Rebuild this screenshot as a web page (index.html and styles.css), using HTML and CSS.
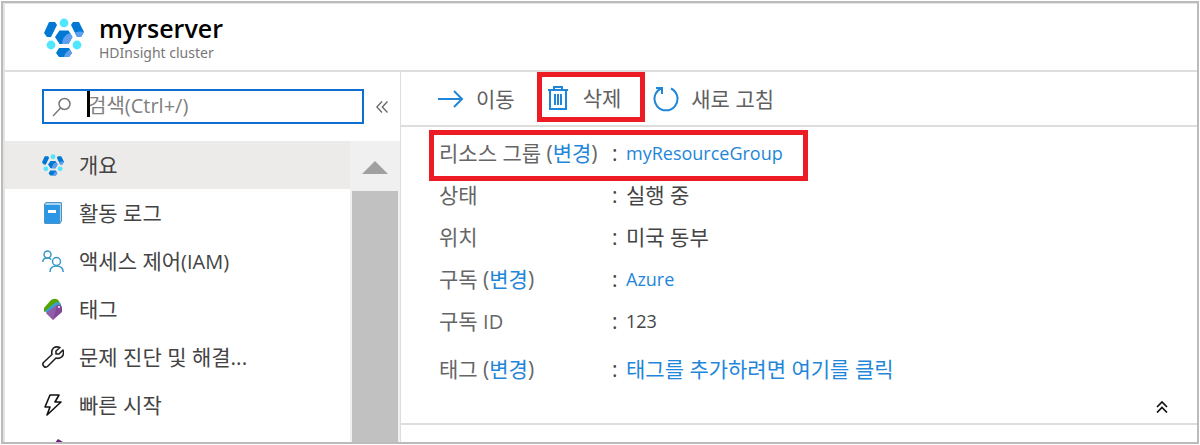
FILE: index.html
```html
<!DOCTYPE html>
<html lang="ko">
<head>
<meta charset="utf-8">
<meta name="viewport" content="width=device-width, initial-scale=1">
<title>myrserver</title>
<link rel="stylesheet" href="styles.css">
</head>
<body>
<svg class="defs" aria-hidden="true">
  <symbol id="cluster" viewBox="0 0 40 40">
    <path fill="#0078d4" d="M5 4h6l2 3-6 12H3l-3-4zM29 4h6l5 10-3 5h-4L27 7zM15.500 12.500h9l4 6.500-4 7h-9L11 19zM15 30h10l3 5-3 4H15l-3-4z"/>
    <path fill="#5ea0ef" d="M31 14.500q5-1.500 9-.5l-3 5h-4zM18 26q0-8 8-11l2.500 4-4 7zM20 39q1-5 6-7.500l2 3.500-3 4z"/>
    <circle fill="#50e6ff" cx="20" cy="5" r="4.400"/><circle fill="#50e6ff" cx="7" cy="27" r="4.400"/><circle fill="#50e6ff" cx="33" cy="27" r="4.400"/>
  </symbol>
</svg>
<div class="frame">
  <header class="header">
    <svg class="logo" aria-hidden="true"><use href="#cluster"/></svg>
    <div>
      <h1 class="title">myrserver</h1>
      <p class="subtitle">HDInsight cluster</p>
    </div>
  </header>
  <div class="body">
    <aside class="sidebar">
      <div class="search-row">
        <label class="search">
          <svg class="search-icon" viewBox="0 0 20 20" aria-hidden="true"><circle cx="12.500" cy="7" r="5.500"/><path d="M8.500 11 1 19"/></svg>
          <input class="search-input" type="text" placeholder="검색(Ctrl+/)" aria-label="검색">
          <span class="caret"></span>
        </label>
        <button class="collapse" type="button" aria-label="메뉴 접기"><svg viewBox="0 0 12 12" aria-hidden="true"><path d="M6 .5.800 6 6 11.500M11.500.500 6.300 6l5.200 5.500"/></svg></button>
      </div>
      <div class="menu">
        <nav class="nav">
          <a class="item active" href="#"><svg viewBox="0 0 40 40" aria-hidden="true"><use href="#cluster"/></svg>개요</a>
          <a class="item" href="#"><svg viewBox="0 0 22 22" aria-hidden="true"><path fill="#4a93c9" d="M4 0h15l1 1v18l-2 3H3l-1-1V2z"/><path fill="#a9d3f3" d="M4 1h15v18l-1 1V3H3z"/><path fill="#2c97e4" d="M3 3h14v18H3z"/><path fill="#fff" d="M6 8h8v3H6z"/></svg>활동 로그</a>
          <a class="item" href="#"><svg viewBox="0 0 22 22" fill="none" stroke="#3999c6" stroke-width="1.500" aria-hidden="true"><circle cx="5.500" cy="4.500" r="3.500"/><path d="M.8 12q0-4 4.700-4 2.500 0 3.700 1.500"/><circle cx="14.500" cy="11.500" r="4"/><path d="M8 22q0-6 6.500-6t6.700 6"/></svg><span>액세스 제어<span class="mixed">(IAM)</span></span></a>
          <a class="item" href="#"><svg viewBox="0 0 22 22" aria-hidden="true"><path fill="#57a300" d="M2 10 9 2q5-3 8 1l1 3-11 6-5 2z"/><path fill="#3aa0d0" d="m3 13 11-9q4 0 5 2v5L6 16z"/><path fill="#804998" d="m4 15 11-8q4-1 5 2v5l-9 8z"/><path fill="#a272b8" opacity=".5" d="m4 15 11-8-4 15z"/><circle fill="#fff" cx="17" cy="9" r="1"/></svg>태그</a>
          <a class="item" href="#"><svg viewBox="0 0 22 22" fill="none" stroke="#222" stroke-width="1.600" stroke-linejoin="round" aria-hidden="true"><path d="M18 1.500 14 5v3h3l4-4q1.500 5-1.500 7-2.500 2-5.500 1l-8 8q-2 2-4 .5-2-2-.5-4l8.500-8q-1-4 1.500-6.500 2.500-2 6.500-.5z"/></svg>문제 진단 및 해결...</a>
          <a class="item" href="#"><svg viewBox="0 0 22 22" fill="none" stroke="#111" stroke-width="1.600" stroke-linejoin="round" aria-hidden="true"><path d="M8 1h9l-4 7h6L5 21l3-8H3z"/></svg>빠른 시작</a>
          <a class="item" href="#" aria-label="진단"><svg class="tall" viewBox="0 0 22 28" aria-hidden="true"><path fill="#68217a" d="m16 0 5 3v19l-5 4-9-11-5 4-2-2 5-4-5-4 2-2 5 4z"/></svg></a>
        </nav>
        <div class="scrollbar"><button class="scroll-up" type="button" aria-label="위로"></button><div class="thumb"></div></div>
      </div>
    </aside>
    <main class="main">
      <div class="toolbar">
        <button class="tool" type="button"><svg viewBox="0 0 26 26" aria-hidden="true"><path d="M0 13h24M16 5l8 8-8 8"/></svg>이동</button>
        <button class="tool marked" type="button"><svg viewBox="0 0 20 26" aria-hidden="true"><path d="M0 5h20M6 5V2h8v3M2 5v19h16V5M7 9v11M10 9v11M13 9v11"/></svg>삭제</button>
        <button class="tool" type="button"><svg viewBox="0 0 26 26" aria-hidden="true"><path d="M18 2.500A11.500 11.500 0 1 1 8 2.500M3 2h6v6"/></svg>새로 고침</button>
      </div>
      <section class="info">
        <dl class="details">
          <div class="row highlighted"><dt>리소스 그룹 (<a href="#">변경</a>)</dt><dd><a class="latin" href="#">myResourceGroup</a></dd></div>
          <div class="row"><dt>상태</dt><dd>실행 중</dd></div>
          <div class="row"><dt>위치</dt><dd>미국 동부</dd></div>
          <div class="row"><dt>구독 (<a href="#">변경</a>)</dt><dd><a class="latin" href="#">Azure</a></dd></div>
          <div class="row"><dt>구독 <span class="mixed">ID</span></dt><dd><span class="latin">123</span></dd></div>
          <div class="row tags"><dt>태그 (<a href="#">변경</a>)</dt><dd><a href="#">태그를 추가하려면 여기를 클릭</a></dd></div>
        </dl>
        <button class="fold" type="button" aria-label="접기"><svg viewBox="0 0 12 12" aria-hidden="true"><path d="m1 6 5-5 5 5M1 11.500l5-5 5 5"/></svg></button>
      </section>
    </main>
  </div>
</div>
</body>
</html>
```
FILE: styles.css
```css
* { box-sizing: border-box; }
body {
  margin: 0;
  padding: 1px;
  background: #fff;
  color: #444;
  font: 21px/28px "Open Sans", "Noto Sans CJK KR", sans-serif;
}
button { padding: 0; border: 0; background: none; color: inherit; font: inherit; }
a { color: #1f86d9; text-decoration: none; }
svg { flex: none; }
.latin { font-size: 18px; }
.mixed { font-size: 20px; }
.defs { position: absolute; width: 0; height: 0; }
.frame {
  display: flex;
  flex-direction: column;
  height: calc(100vh - 2px);
  border: 2px solid #bbb;
  box-shadow: inset 2px 1px #e4e4e4;
  padding-left: 2px;
  overflow: hidden;
}
.header {
  display: flex;
  gap: 15px;
  height: 69px;
  flex: none;
  padding: 10px 0 0 39px;
  border-bottom: 2px solid #ddd;
}
.logo { width: 40px; height: 40px; margin-top: 5px; }
.title { margin: 0; color: #000; font: 600 25px/30px "Open Sans", sans-serif; }
.subtitle { margin: 0; color: #777; font: 14px/20px "Noto Sans", sans-serif; }
.body { display: flex; flex: 1; min-height: 0; }
.sidebar { display: flex; flex-direction: column; width: 396px; flex: none; border-right: 1px solid #ddd; }
.search-row { display: flex; align-items: center; gap: 12px; padding: 17px 12px 17px 37px; }
.search {
  position: relative;
  display: flex;
  align-items: center;
  flex: 1;
  height: 35px;
  padding-left: 8px;
  gap: 16px;
  border: 2px solid #0f6fd1;
}
.search-icon { width: 20px; height: 20px; fill: none; stroke: #777; stroke-width: 1.5; }
.search-input { flex: 1; min-width: 0; padding: 0 0 2px; border: 0; outline: 0; background: none; font: inherit; font-size: 20px; line-height: 28px; }
.search-input::placeholder { color: #808080; opacity: 1; }
.caret { position: absolute; left: 43px; top: 0; width: 3px; height: 26px; background: #000; }
.collapse, .fold { display: flex; }
.collapse svg, .fold svg { width: 12px; height: 12px; fill: none; stroke: #666; stroke-width: 1.3; }
.menu { display: flex; flex: 1; min-height: 0; overflow: hidden; }
.nav { flex: 1; min-width: 0; }
.item { display: flex; align-items: center; gap: 15px; height: 48px; padding-left: 37px; color: #444; white-space: nowrap; }
.item svg { width: 22px; height: 22px; }
.item .tall { height: 28px; }
.active { background: #edebe9; }
.scrollbar { display: flex; flex-direction: column; width: 50px; background: #f0f0f0; }
.scroll-up { display: flex; align-items: center; justify-content: center; height: 50px; padding-top: 2px; }
.scroll-up::before { content: ""; border: 13px solid transparent; border-top: 0; border-bottom-color: #a0a0a0; }
.thumb { flex: 1; margin: 0 2px; background: #c1c1c1; }
.main { flex: 1; min-width: 0; }
.toolbar { display: flex; gap: 8px; height: 55px; padding-left: 37px; border-bottom: 2px solid #ddd; }
.tool { display: flex; align-items: center; gap: 12px; padding-top: 1px; color: #606060; }
.tool svg { width: 26px; height: 26px; fill: none; stroke: #1f86d9; stroke-width: 2; }
.marked { height: 50px; margin-left: 14px; padding: 1px 19px 0 6px; border: 5px solid #ed1c24; gap: 15px; }
.marked svg { width: 20px; }
.info { padding: 5px 29px 0 38px; border-bottom: 2px solid #ddd; }
.details { margin: 0; }
.row { position: relative; display: flex; align-items: center; height: 42px; }
.row dt { width: 173px; color: #666; white-space: nowrap; }
.row dd { display: flex; margin: 0; }
.row dd::before { content: ":"; width: 14px; }
.highlighted { width: fit-content; }
.highlighted::after { content: ""; position: absolute; inset: -2px -25px -7px -10px; border: 5px solid #ed1c24; pointer-events: none; }
.tags { margin-top: 6px; }
.fold { margin: 11px 0 10px auto; }
.fold svg { stroke: #111; stroke-width: 1.7; }
```
